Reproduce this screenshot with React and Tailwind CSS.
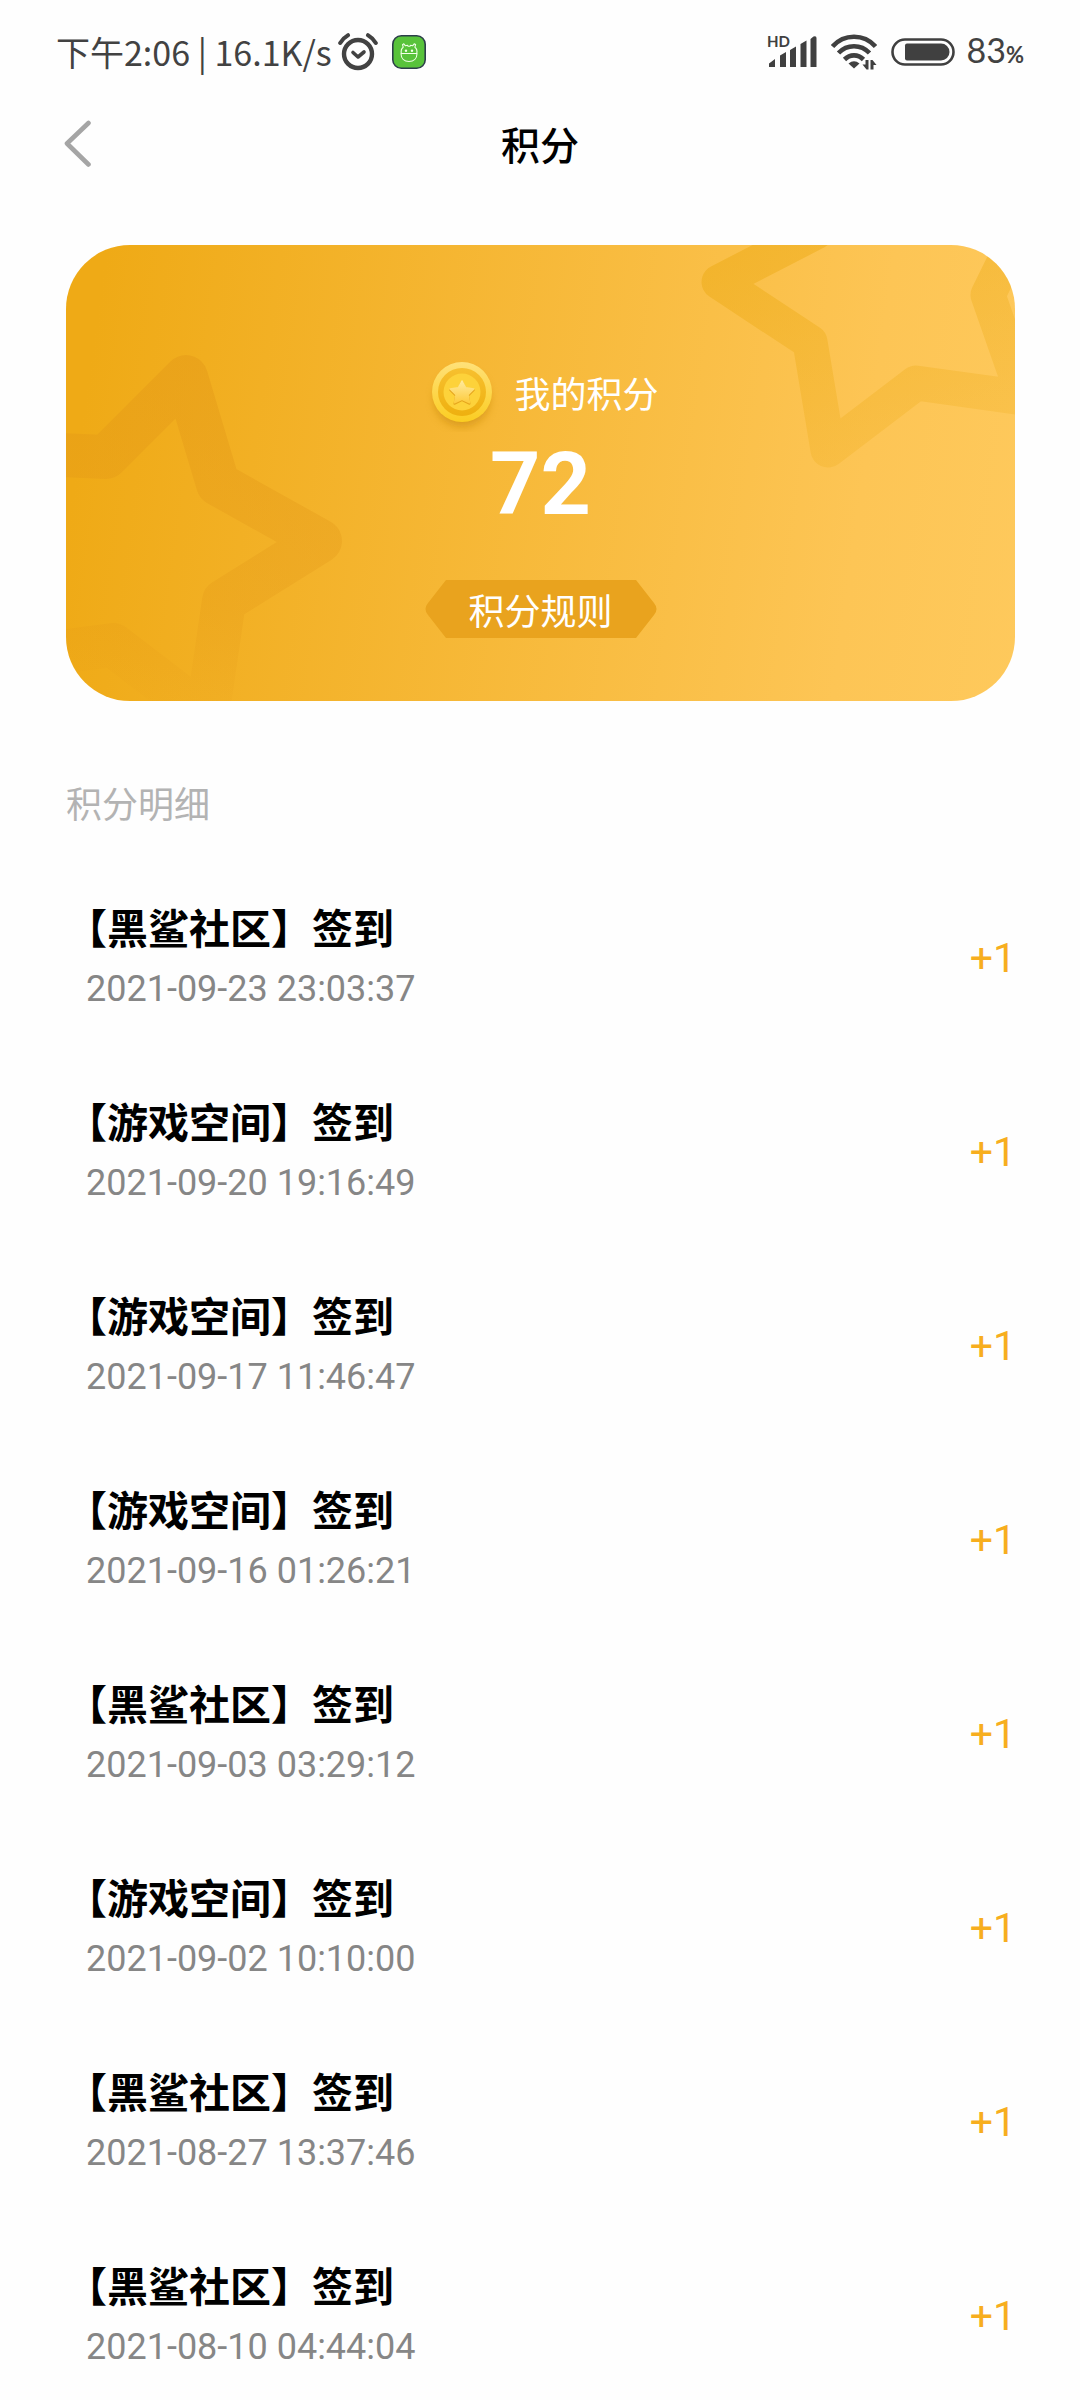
import React from 'react'

const records = [
    { title: '【黑鲨社区】签到', time: '2021-09-23 23:03:37', points: '+1' },
    { title: '【游戏空间】签到', time: '2021-09-20 19:16:49', points: '+1' },
    { title: '【游戏空间】签到', time: '2021-09-17 11:46:47', points: '+1' },
    { title: '【游戏空间】签到', time: '2021-09-16 01:26:21', points: '+1' },
    { title: '【黑鲨社区】签到', time: '2021-09-03 03:29:12', points: '+1' },
    { title: '【游戏空间】签到', time: '2021-09-02 10:10:00', points: '+1' },
    { title: '【黑鲨社区】签到', time: '2021-08-27 13:37:46', points: '+1' },
    { title: '【黑鲨社区】签到', time: '2021-08-10 04:44:04', points: '+1' },
]

const AlarmIcon = () => (
    <svg className="w-10 h-[38px]" viewBox="0 0 40 38" fill="none" stroke="#424242" strokeLinecap="round" strokeLinejoin="round">
        <circle cx="20" cy="21" r="14" strokeWidth="4.4" />
        <path d="M15 19.5l5 4.5 6-5" strokeWidth="3.6" />
        <path d="M2.2 10Q5 5 10 2.2M37.8 10Q35 5 30 2.2" strokeWidth="4" />
    </svg>
)

const AppIcon = () => (
    <svg className="w-[34px] h-[34px]" viewBox="0 0 34 34" fill="none">
        <rect x="0.8" y="0.8" width="32.4" height="32.4" rx="8.5" fill="#58c33b" stroke="#2c3e4a" strokeWidth="1.6" />
        <g stroke="#f1ffe9" strokeWidth="1.1" strokeLinejoin="round">
            <path d="M9 18.5h16c0 5-3.3 8-8 8s-8-3-8-8z" />
            <path d="M9.3 18.5c-.5-2.7.2-5 1.9-6.3l-.7-2.6 1.3-.8 1.7 2 2-.5.6 1h1.9l.6-1 2 .5 1.6-2 1.4.8-.7 2.6c1.8 1.3 2.4 3.6 1.9 6.3" />
        </g>
        <circle cx="14" cy="15.8" r="1.2" fill="#f1ffe9" />
        <circle cx="20" cy="15.8" r="1.2" fill="#f1ffe9" />
    </svg>
)

const SignalIcon = () => (
    <svg className="w-[50px] h-[34px] overflow-visible" viewBox="0 0 50 34" fill="#404040">
        <text x="0" y="12" className="font-['Lato'] text-[15px] font-bold">HD</text>
        <path d="M2 32v-3.5l6-4.5v8zM13 32V20.5l6-3.5v15zM23 32V15l6-3.5V32zM33.5 32V9l6-3.5V32zM43.5 32V4l3-2.5q3-1 3 1.5v29z" />
    </svg>
)

const WifiIcon = () => (
    <svg className="w-[46px] h-[36px]" viewBox="0 0 46 36" fill="none" stroke="#404040" strokeWidth="4.6">
        <path d="M1.5 12.5C13-.5 33-.5 44.5 12.5" />
        <path d="M7.5 19C16 10 30 10 38.5 19" />
        <path d="M13.5 25.5C19 20 27 20 32.5 25.5" />
        <path d="M17.5 29.5q5.5-4.5 11 0L23 34.5z" fill="#404040" stroke="none" />
        <path d="M37.5 26v9.5h-2l-4-5h3v-4.5zM39.5 35.5V26h2l4 5h-3v4.5z" fill="#404040" stroke="none" />
    </svg>
)

const BatteryIcon = () => (
    <svg className="w-16 h-7" viewBox="0 0 64 28" fill="none">
        <rect x="1.5" y="1.5" width="61" height="25" rx="12.5" stroke="#404040" strokeWidth="2.6" />
        <path d="M16 5.5h34a8.5 8.5 0 0 1 0 17H16a2 2 0 0 1-2-2v-13a2 2 0 0 1 2-2z" fill="#404040" />
    </svg>
)

const StatusBar = () => (
    <div className="h-[104px] px-14 flex items-center justify-between text-[#424242]">
        <div className="flex items-center gap-1.5">
            <span className="text-[34px] leading-10">下午2:06 | 16.1K/s</span>
            <div className="flex items-center gap-[14px]">
                <AlarmIcon />
                <AppIcon />
            </div>
        </div>
        <div className="flex items-center gap-[14px]">
            <SignalIcon />
            <WifiIcon />
            <div className="flex items-center gap-3">
                <BatteryIcon />
                <span className="font-['Lato',sans-serif] text-[34px] leading-10">
                    83<span className="text-[22px] font-bold">%</span>
                </span>
            </div>
        </div>
    </div>
)

const Header = () => (
    <header className="h-[78px] px-14 grid grid-cols-3 items-center">
        <button type="button" aria-label="返回" className="w-12 h-[78px] flex items-center pl-2">
            <svg className="w-7 h-12" viewBox="0 0 28 48" fill="none" stroke="#a5a5a5" strokeWidth="4.6" strokeLinecap="round" strokeLinejoin="round">
                <path d="M24.5 4L3 24.5 24.5 45.5" />
            </svg>
        </button>
        <h1 className="text-center text-[39px] leading-[56px] font-medium text-black">积分</h1>
    </header>
)

const CardStars = () => (
    <svg className="absolute inset-0 w-full h-full" viewBox="0 0 949 456" preserveAspectRatio="none" fill="none" strokeLinejoin="round">
        <defs>
            <linearGradient id="starLeft" gradientUnits="userSpaceOnUse" x1="140" y1="110" x2="80" y2="456">
                <stop offset="0" stopColor="#e29617" stopOpacity="0.42" />
                <stop offset="0.7" stopColor="#e29617" stopOpacity="0.25" />
                <stop offset="1" stopColor="#e29617" stopOpacity="0.05" />
            </linearGradient>
            <linearGradient id="starRight" gradientUnits="userSpaceOnUse" x1="700" y1="0" x2="790" y2="230">
                <stop offset="0" stopColor="#eaa70d" stopOpacity="0.44" />
                <stop offset="1" stopColor="#eaa70d" stopOpacity="0.2" />
            </linearGradient>
        </defs>
        <path
            stroke="url(#starLeft)"
            strokeWidth="44"
            d="M120 132L152 239 254 296 158 356 141 472 47 400-69 415-23 312-78 207 40 212z"
        />
        <path
            stroke="url(#starRight)"
            strokeWidth="35"
            d="M653 37L744 97 762 205 850 138 958 153 922 50 970-48 864-35 780-110 750-13z"
        />
    </svg>
)

const CoinIcon = () => (
    <svg className="w-20 h-20" viewBox="0 0 80 80">
        <defs>
            <linearGradient id="coinRim" x1="0" y1="0" x2="0" y2="1">
                <stop offset="0" stopColor="#ffe179" />
                <stop offset="1" stopColor="#fbcd21" />
            </linearGradient>
            <linearGradient id="coinGroove" x1="0" y1="0" x2="0" y2="1">
                <stop offset="0" stopColor="#f7c02f" />
                <stop offset="1" stopColor="#eeb00f" />
            </linearGradient>
            <linearGradient id="coinStar" x1="0" y1="0" x2="0" y2="1">
                <stop offset="0" stopColor="#ffea9c" />
                <stop offset="1" stopColor="#fdcb3d" />
            </linearGradient>
            <filter id="coinShadow" x="-30%" y="-30%" width="160%" height="160%">
                <feGaussianBlur stdDeviation="4" />
            </filter>
        </defs>
        <circle cx="40" cy="47" r="28" fill="#c98a0c" opacity="0.6" filter="url(#coinShadow)" />
        <circle cx="40" cy="40" r="30" fill="url(#coinRim)" />
        <circle cx="40" cy="40" r="24" fill="url(#coinGroove)" />
        <circle cx="40" cy="40" r="18.5" fill="#fdd23a" />
        <path
            d="M40 30l3.6 6.7 8.2 1.3-5.8 5.8 1.5 8-7.5-3.6-7.5 3.6 1.5-8-5.8-5.8 8.2-1.3z"
            fill="#e5a51d"
            stroke="#e5a51d"
            strokeWidth="2"
            strokeLinejoin="round"
        />
        <path
            d="M40 29l3.6 6.7 8.2 1.3-5.8 5.8 1.5 8-7.5-3.6-7.5 3.6 1.5-8-5.8-5.8 8.2-1.3z"
            fill="url(#coinStar)"
            stroke="url(#coinStar)"
            strokeWidth="1.5"
            strokeLinejoin="round"
        />
    </svg>
)

const PointsCard = () => (
    <section className="relative overflow-hidden mt-[63px] ml-[66px] mr-[65px] rounded-[64px] bg-[linear-gradient(98deg,#efaa16_4%,#fdc555_82%,#fec95c_100%)] text-white">
        <CardStars />
        <div className="relative flex flex-col items-center pt-[107px] pb-[63px]">
            <div className="flex items-center gap-3">
                <CoinIcon />
                <span className="text-[36px] leading-[54px]">我的积分</span>
            </div>
            <strong className="font-['Roboto',sans-serif] text-[88px] leading-[104px] font-bold">72</strong>
            <button type="button" className="relative mt-11 w-[232px] h-[58px] text-[36px] leading-[54px]">
                <svg className="absolute inset-0 w-full h-full" viewBox="0 0 232 58" fill="#e9a31e">
                    <path d="M21 0h190l18 23q5 6 0 12l-18 23H21L3 35q-5-6 0-12z" />
                </svg>
                <span className="relative">积分规则</span>
            </button>
        </div>
    </section>
)

const RecordRow = ({ title, time, points }) => (
    <li className="h-[194px] flex items-center justify-between">
        <div>
            <p className="text-[41px] leading-[62px] font-bold text-black">{title}</p>
            <time className="block pl-5 font-['Roboto',sans-serif] text-[36px] leading-[64px] text-[#868686]">{time}</time>
        </div>
        <span className="font-['Roboto',sans-serif] text-[41px] leading-[62px] text-[#f7ae1e]">{points}</span>
    </li>
)

const App = () => {
    return (
        <main className="min-h-screen bg-[#fefefe] font-['Noto_Sans_CJK_SC',sans-serif]" lang="zh-CN">
            <StatusBar />
            <Header />
            <PointsCard />
            <section className="pl-[66px] pr-16 pt-[73px]">
                <h2 className="text-[36px] leading-[56px] text-[#b3b3b3]">积分明细</h2>
                <ul className="pt-[31px]">
                    {records.map((record) => (
                        <RecordRow key={record.time} {...record} />
                    ))}
                </ul>
            </section>
        </main>
    )
}

export default App
